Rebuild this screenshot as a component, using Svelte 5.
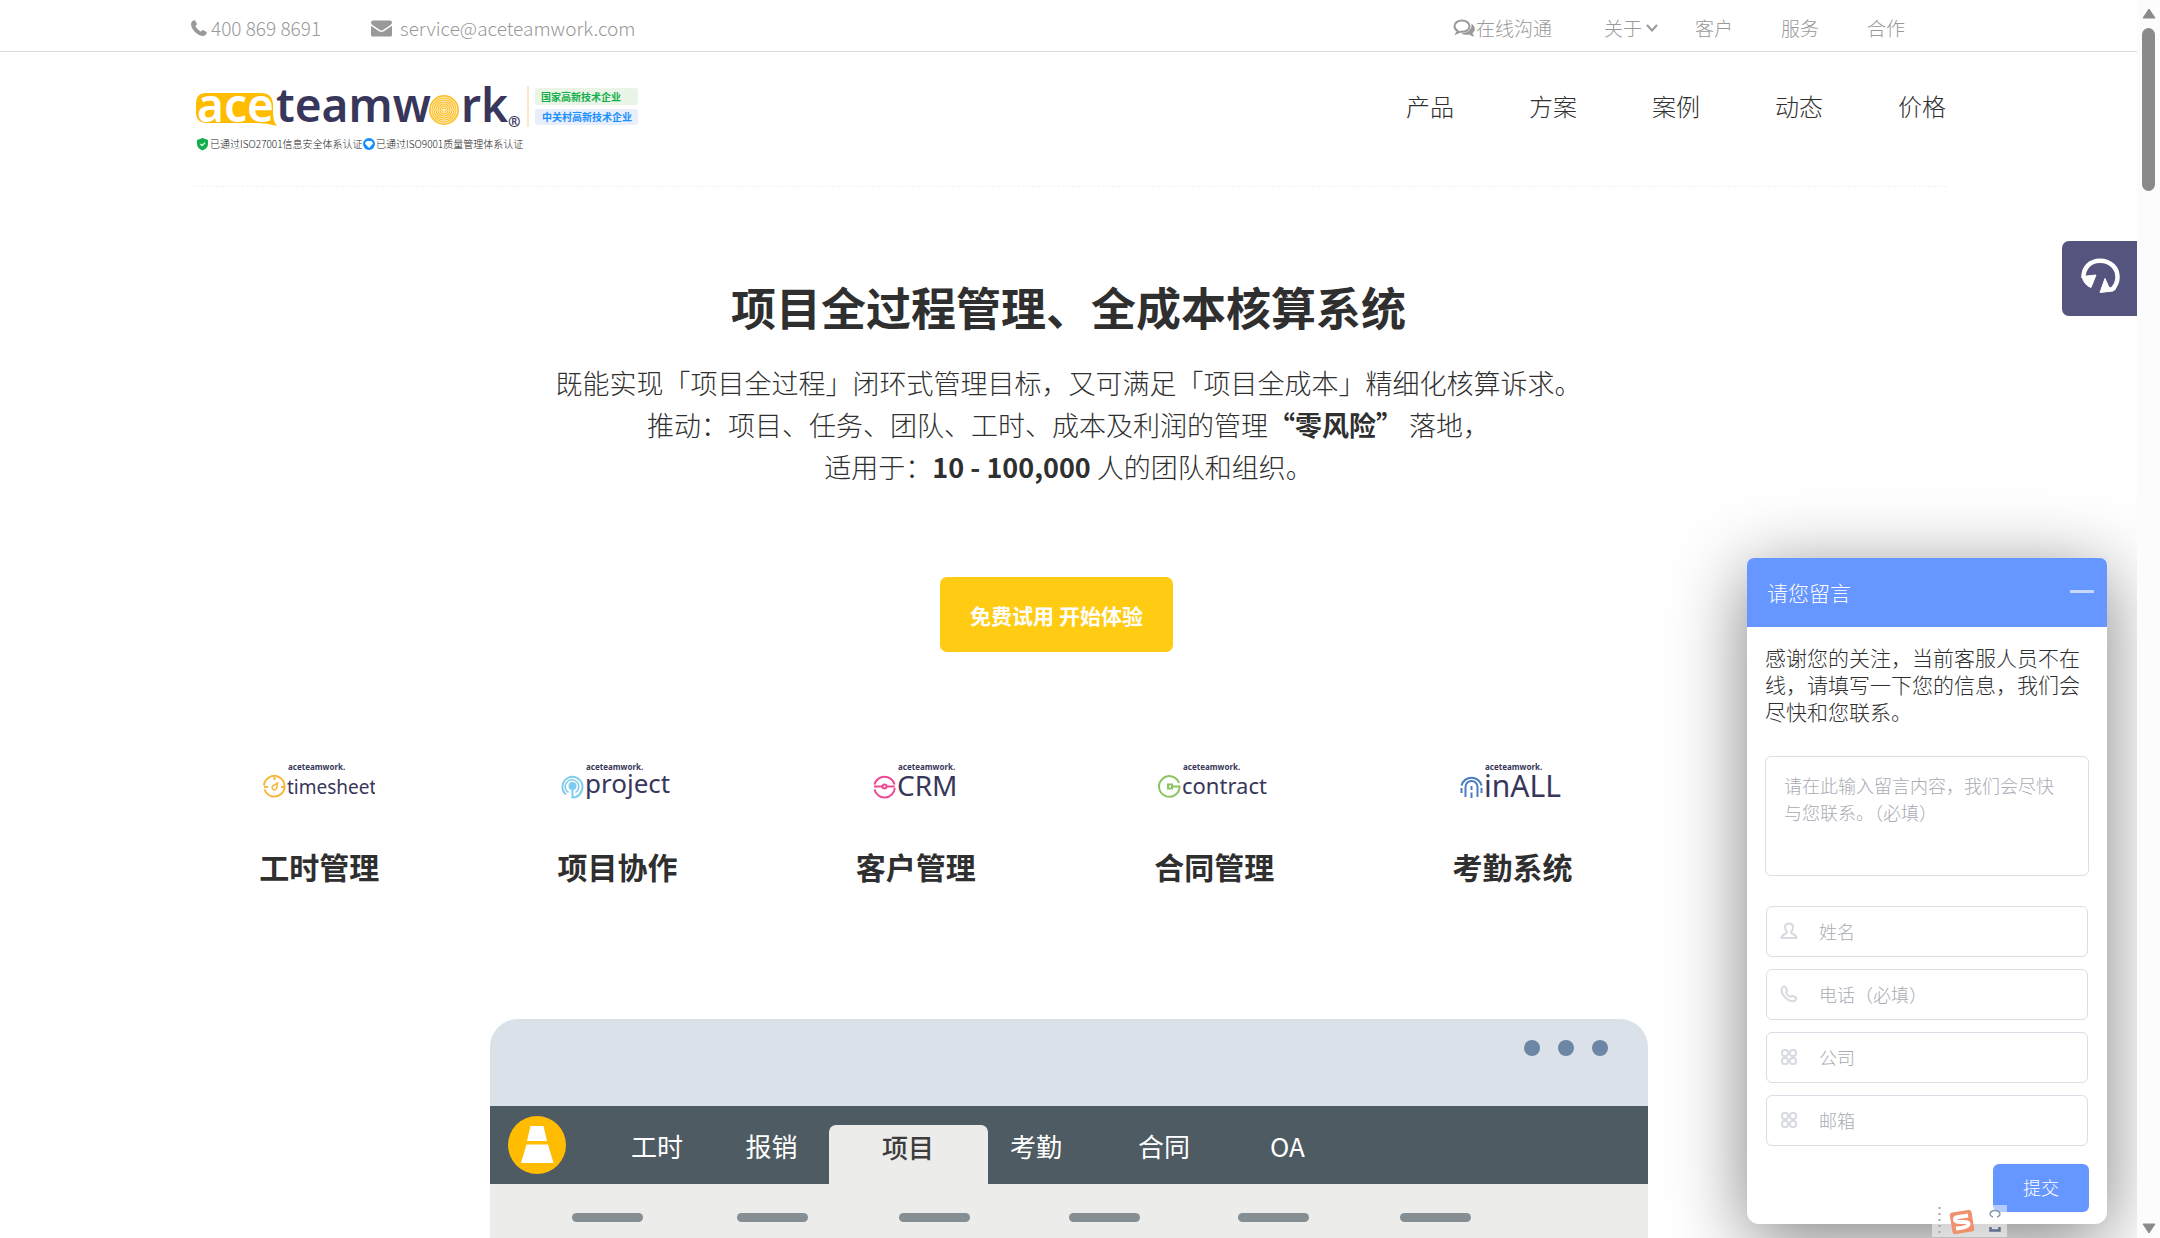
<script>
  const topLinks = ['客户', '服务', '合作'];
  const navLinks = ['产品', '方案', '案例', '动态', '价格'];
  const features = [
    { id: 'timesheet', title: '工时管理', width: 112, size: 19, base: 34 },
    { id: 'project', title: '项目协作', width: 112, size: 26, base: 33 },
    { id: 'CRM', title: '客户管理', width: 86, size: 28, base: 36 },
    { id: 'contract', title: '合同管理', width: 112, size: 22, base: 34 },
    { id: 'inALL', title: '考勤系统', width: 104, size: 30, base: 37 }
  ];
  const fields = [
    { id: 'name', label: '姓名', icon: 'user' },
    { id: 'phone', label: '电话（必填）', icon: 'phone' },
    { id: 'company', label: '公司', icon: 'grid' },
    { id: 'email', label: '邮箱', icon: 'grid' }
  ];
  const rings = [3, 5, 7, 9, 11, 13];
</script>

<div class="page">
  <div class="topbar">
    <div class="container bar">
      <div class="contact">
        <a href="#tel" class="tel">
          <svg width="16" height="16" viewBox="0 0 16 16" aria-hidden="true"><path fill="currentColor" d="M1.2 1.2C2.300 .4 3.500 0 4 .3L6 3.900C6.200 4.500 4.700 5.500 4.600 6.100C4.500 7 8.600 11.300 9.900 11.400C10.500 11.400 11.300 9.800 12 10L15.600 12C16 12.500 15.600 13.700 14.800 14.700C13.700 15.800 11.500 16.300 9.500 15.500C5.700 14 1.700 10.200 .4 6.400C-.2 4.400 .1 2.300 1.200 1.200Z" /></svg>
          400 869 8691
        </a>
        <a href="#mail" class="mail">
          <svg width="21" height="17" viewBox="0 0 21 17" aria-hidden="true"><path fill="currentColor" d="M2 .5H19Q21 .5 21 2.500Q21 3.800 19.500 5L12 10Q10.500 11 9 10L1.500 5Q0 3.800 0 2.500Q0 .5 2 .5ZM0 5.700L8 11.200Q10.500 12.800 13 11.200L21 5.700V15Q21 16.500 19.500 16.500H1.500Q0 16.500 0 15Z" /></svg>
          service@aceteamwork.com
        </a>
      </div>
      <nav class="toplinks" aria-label="辅助导航">
        <a href="#chat" class="chatlink">
          <svg width="22" height="18" viewBox="0 0 22 18" aria-hidden="true">
            <path d="M9 1.500C4.800 1.500 1.500 4 1.500 7.200C1.500 9.200 2.800 10.900 4.600 11.900L3.500 14.300L7.300 12.700C13 13.400 16.500 10.500 16.500 7.200C16.500 4 13.200 1.500 9 1.500Z" fill="none" stroke="currentColor" stroke-width="2" />
            <path fill="currentColor" d="M18.500 4.500C23 8 22.500 12 19.500 14.200Q20 16 21.500 17.500Q18.500 17.500 16.500 15.600C13 16.200 10 15.700 8 14.500C14.500 14.500 19.300 10.500 18.500 4.500Z" />
          </svg>在线沟通</a>
        <a href="#about" class="about">关于<svg width="14" height="10" viewBox="0 0 14 10" aria-hidden="true"><path d="M2 2L7 7.500L12 2" fill="none" stroke="currentColor" stroke-width="2" /></svg></a>
        {#each topLinks as link}
          <a href="#{link}">{link}</a>
        {/each}
      </nav>
    </div>
  </div>

  <header class="container header">
    <a href="#home" class="brand" aria-label="aceteamwork">
      <svg width="450" height="92" viewBox="0 -20 450 92">
        <path fill="#ffbc00" d="M15 9H70Q81 9 82 20C82 32 82 37 86 42Q76 39 66 39H16Q5 39 5 28V20Q5 9 15 9Z" />
        <g class="word">
          <text x="6" y="38" fill="#fff">ace</text>
          <text x="85" y="38">teamw</text>
          <text x="270" y="38">rk</text>
        </g>
        <circle cx="253" cy="26" r="15" fill="#ffc02a" />
        {#each rings as r}
          <circle cx="253" cy="26" {r} fill="none" stroke="#ffedc0" stroke-width="1" />
        {/each}
        <circle cx="253" cy="26" r="1.500" fill="#fff" />
        <text class="reg" x="317" y="43">®</text>
        <rect x="336" y="2" width="2" height="41" fill="#fde8c6" />
        <rect x="344" y="4" width="103" height="17" rx="3" fill="#ebf5e7" />
        <rect x="344" y="25" width="103" height="16" rx="3" fill="#e8eefa" />
        <text class="tag" x="350" y="17" fill="#12b04c">国家高新技术企业</text>
        <text class="tag" x="351" y="37" fill="#1890ff">中关村高新技术企业</text>
        <path fill="#12b04c" d="M11.500 54L17 56V60Q17 64 11.500 66.500Q6 64 6 60V56Z" />
        <path d="M9.500 60L11.200 61.700L14 58.700" fill="none" stroke="#fff" stroke-width="1.200" />
        <text class="iso" x="19" y="64">已通过ISO27001信息安全体系认证</text>
        <circle cx="178" cy="60" r="6" fill="#1890ff" />
        <path fill="#fff" d="M175.500 57H180.500L182 59.500L178 64L174 59.500Z" />
        <text class="iso" x="185" y="64">已通过ISO9001质量管理体系认证</text>
      </svg>
    </a>
    <nav class="mainnav" aria-label="主导航">
      {#each navLinks as link}
        <a href="#{link}">{link}</a>
      {/each}
    </nav>
  </header>

  <main class="container">
    <section class="hero">
      <h1>项目全过程管理、全成本核算系统</h1>
      <p>
        既能实现「项目全过程」闭环式管理目标，又可满足「项目全成本」精细化核算诉求。<br />
        推动：项目、任务、团队、工时、成本及利润的管理<strong>“零风险”</strong> 落地，<br />
        适用于：<strong>10 - 100,000</strong> 人的团队和组织。
      </p>
      <button type="button" class="cta">免费试用 开始体验</button>
    </section>

    <section class="features">
      {#each features as f}
        <a href="#{f.id}" class="feature">
          <svg width={f.width} height="44" viewBox="0 0 {f.width} 44" role="img" aria-label={f.id}>
            <text class="mini" x="25" y="10">aceteamwork.</text>
            <text class="product" x="24" y={f.base} font-size={f.size}>{f.id}</text>
            <g fill="none" stroke-width="2">
              {#if f.id === 'timesheet'}
                <g stroke="#f6b73c">
                  <path d="M1 25.500A10.300 10.300 0 1 1 1.500 29.500M1 27H5M11.500 17V20M18 27H21" />
                  <path d="M14.500 23L13.500 28.500A2.300 2.300 0 1 1 10.500 25.500Z" stroke-width="1.500" />
                </g>
              {:else if f.id === 'project'}
                <g stroke="#7fcdee">
                  <circle cx="11.500" cy="26" r="4" fill="#7fcdee" stroke="none" />
                  <path d="M11.500 29V37.500C17.500 37.500 21.500 32.500 21.500 26.500A10 10 0 1 0 5 34.500" />
                  <path d="M14.500 32.500A6.800 6.800 0 1 0 7.500 32.500" stroke-width="1.500" />
                </g>
              {:else if f.id === 'CRM'}
                <g stroke="#ee4a94">
                  <path d="M1.500 24.500A10.300 10.300 0 0 1 21.500 24.500M1 26.500H9M21.800 28A10.300 10.300 0 0 1 1.500 29.500M14 26.500H21.800" />
                  <circle cx="11.500" cy="26.500" r="2" />
                </g>
              {:else if f.id === 'contract'}
                <g stroke="#8cc462">
                  <path d="M21 23A10.300 10.300 0 1 0 21.600 26.500H14" />
                  <rect x="10" y="24.500" width="4" height="4" />
                </g>
              {:else}
                <g stroke="#4a7cc4">
                  <path d="M1.500 25.500A10.300 10.300 0 0 1 21.500 25.500M1.500 28V33M21.500 28V33" />
                  <path d="M5.500 37V27A6 6 0 0 1 17.500 27V37M11.500 26V30M11.500 32.500V38" />
                </g>
              {/if}
            </g>
          </svg>
          <h2>{f.title}</h2>
        </a>
      {/each}
    </section>

    <section class="mock" aria-label="产品界面示意">
      <div class="chrome"><i></i><i></i><i></i></div>
      <div class="tabs">
        <svg width="58" height="58" viewBox="0 0 58 58" aria-hidden="true">
          <circle cx="29" cy="29" r="29" fill="#ffbc00" />
          <path fill="#fff" d="M22.500 10H35.500L39 25H19ZM18.500 28.500H40L45.500 47H13Z" />
        </svg>
        <span>工时</span><span>报销</span><span class="active">项目</span><span>考勤</span><span>合同</span><span>OA</span>
      </div>
      <div class="lines"><i></i><i></i><i></i><i></i><i></i><i></i></div>
    </section>
  </main>

  <button type="button" class="support" aria-label="在线客服">
    <svg width="40" height="36" viewBox="0 0 40 36" aria-hidden="true">
      <path d="M3.500 20C3 10 10 2.800 20 2.800C31 2.800 37.500 10.500 37.500 19Q37.500 26 32.500 31" fill="none" stroke="#fff" stroke-width="4.500" />
      <path fill="#fff" stroke="#fff" stroke-linejoin="round" d="M2 18.500L16 17L11 29.500Q4 27 2 18.500ZM25 20.500L29 29.500L36 30.500L33 33L20 34.500Z" />
    </svg>
  </button>

  <form class="chat" onsubmit={(e) => e.preventDefault()}>
    <div class="chathead">
      <span>请您留言</span>
      <button type="button" aria-label="最小化"></button>
    </div>
    <div class="chatbody">
      <p>感谢您的关注，当前客服人员不在线，请填写一下您的信息，我们会尽快和您联系。</p>
      <textarea aria-label="留言内容" placeholder="请在此输入留言内容，我们会尽快与您联系。（必填）"></textarea>
      <div class="fields">
        {#each fields as f}
          <label class="field" for="f-{f.id}">
            <svg width="18" height="18" viewBox="0 0 18 18" fill="none" stroke="#d8dae1" stroke-width="2" stroke-linejoin="round" aria-hidden="true">
              {#if f.icon === 'user'}
                <path d="M9 1.500C11.500 1.500 13 3 13 5.500C13 7.500 12 9 11 10Q11 11.500 13 12Q16 13 16.500 16H1.500Q2 13 5 12Q7 11.500 7 10C6 9 5 7.500 5 5.500C5 3 6.500 1.500 9 1.500Z" />
              {:else if f.icon === 'phone'}
                <path d="M2 3Q4 .5 5.500 2L7 5Q7 6.500 6 7.500Q7 10.500 10.500 12Q12 10.500 13 11L16 12.500Q17 14 14.500 16C10 17.500 -.5 10 2 3Z" />
              {:else}
                <rect x="2" y="2" width="6" height="6" rx="2.500" /><rect x="10" y="2" width="6" height="6" rx="2.500" />
                <rect x="2" y="10" width="6" height="6" rx="2.500" /><rect x="10" y="10" width="6" height="6" rx="2.500" />
              {/if}
            </svg>
            <input id="f-{f.id}" type="text" placeholder={f.label} aria-label={f.label} />
          </label>
        {/each}
      </div>
      <button type="submit" class="submit">提交</button>
    </div>
  </form>
</div>

<div class="ime" aria-hidden="true">
  <svg width="75" height="32" viewBox="0 0 75 32">
    <path d="M7.500 2V32" stroke="#a8a8a8" stroke-width="2" stroke-dasharray="2 4" />
    <g transform="rotate(-9 30 17)">
      <rect x="19" y="6" width="22" height="22" rx="3" fill="#f0906c" />
      <path d="M37 11.500H26Q23 11.500 23.500 14Q24 16.500 30 17Q37 17.500 36 20.500Q35 23.500 23 22.500" fill="none" stroke="#fff" stroke-width="4" />
    </g>
    <path d="M61 12C56 10 58 5.500 63 5.500C68 5.500 70 10 65 12" fill="none" stroke="#8b98ad" stroke-width="1.500" />
    <path d="M58.500 22V25.500H67.500V22" fill="none" stroke="#5d6f8c" stroke-width="2.500" />
  </svg>
</div>

<div class="scrollbar" aria-hidden="true">
  <svg width="14" height="11" viewBox="0 0 14 11"><path d="M7 1L13 10H1Z" fill="#8a8a8a" stroke="#8a8a8a" stroke-linejoin="round" /></svg>
  <i></i>
  <svg class="down" width="14" height="11" viewBox="0 0 14 11"><path d="M7 10L13 1H1Z" fill="#8a8a8a" stroke="#8a8a8a" stroke-linejoin="round" /></svg>
</div>

<style>
  :global(body) {
    background: #fff;
    overflow: hidden;
  }
  :global(#app) {
    display: flex;
    height: 100vh;
    font-family: 'Noto Sans CJK SC', 'Noto Sans', sans-serif;
    color: #2f2f2f;
  }
  * { box-sizing: border-box; }
  a { color: inherit; text-decoration: none; }
  button, input, textarea { font: inherit; border: 0; margin: 0; }
  svg { display: block; flex: none; }

  .page {
    flex: 1;
    min-width: 0;
    position: relative;
    overflow: hidden;
  }
  .container {
    max-width: 1755px;
    margin: 0 auto;
  }
  .topbar {
    border-bottom: 1px solid #ddd;
    color: #999;
    font-size: 19px;
    font-weight: 300;
    line-height: 28px;
  }
  .bar {
    display: flex;
    justify-content: space-between;
    align-items: center;
    height: 51px;
    padding-top: 5px;
  }
  .contact, .toplinks, .contact a, .toplinks a {
    display: flex;
    align-items: center;
  }
  .contact { gap: 50px; }
  .tel { gap: 4px; }
  .mail { gap: 8px; }
  .toplinks {
    gap: 48px;
    padding-right: 41px;
  }
  .chatlink {
    gap: 1px;
    margin-right: 4px;
  }
  .about {
    gap: 3px;
    margin-right: -12px;
  }
  .header {
    display: flex;
    justify-content: space-between;
    align-items: flex-start;
    height: 135px;
    padding-top: 12px;
    border-bottom: 1px dashed #f2f2f2;
  }
  .word {
    font-family: 'Noto Sans', sans-serif;
    font-size: 46px;
    font-weight: 600;
    fill: #38365a;
  }
  .reg {
    font: 700 15px 'Noto Sans', sans-serif;
    fill: #38365a;
  }
  .tag { font-size: 10px; font-weight: 700; }
  .iso { font-size: 10px; font-weight: 300; fill: #222; }
  .mainnav {
    display: flex;
    gap: 75px;
    padding-top: 24px;
    font-size: 24px;
    font-weight: 300;
    line-height: 36px;
  }

  .hero {
    display: flex;
    flex-direction: column;
    align-items: center;
    padding-top: 90px;
    text-align: center;
  }
  h1 {
    margin: 0 0 25px;
    font-size: 45px;
    line-height: 60px;
  }
  .hero p {
    margin: 0 0 89px;
    font-size: 27px;
    font-weight: 300;
    line-height: 42px;
  }
  strong { font-weight: 700; }
  .cta {
    height: 75px;
    padding: 1px 30px 0;
    margin-right: 24px;
    border-radius: 7px;
    background: #ffcb13;
    color: #fff;
    font-size: 21px;
    font-weight: 700;
  }
  .features {
    display: grid;
    grid-template-columns: repeat(6, 1fr);
    margin: 108px -14px 0 -21px;
  }
  .feature {
    display: flex;
    flex-direction: column;
    align-items: center;
  }
  .mini {
    font: 700 8px 'Noto Sans', sans-serif;
    fill: #38365a;
  }
  .product {
    font-family: 'Noto Sans', sans-serif;
    fill: #38365a;
  }
  h2 {
    margin: 40px 0 0;
    font-size: 30px;
    line-height: 44px;
  }

  .mock {
    max-width: 1158px;
    margin: 131px auto 0;
  }
  .chrome {
    display: flex;
    justify-content: flex-end;
    gap: 18px;
    height: 87px;
    padding: 21px 40px 0;
    border-radius: 28px 28px 0 0;
    background: #dae1e9;
  }
  .chrome i {
    width: 16px;
    height: 16px;
    border-radius: 50%;
    background: #6c87a6;
  }
  .tabs {
    display: grid;
    grid-template-columns: 92px 115px 114px 159px 97px 159px 88px;
    align-items: center;
    height: 78px;
    padding-left: 18px;
    background: #4e5b63;
    color: #fff;
    font-size: 26px;
    text-align: center;
  }
  .tabs .active {
    align-self: end;
    height: 59px;
    border-radius: 7px 7px 0 0;
    background: #ececea;
    color: #3c3c3c;
    font-weight: 500;
    line-height: 44px;
  }
  .lines {
    display: grid;
    grid-template-columns: 165px 162px 170px 169px 162px 71px;
    height: 130px;
    padding: 29px 0 0 82px;
    background: #ececea;
  }
  .lines i {
    width: 71px;
    height: 9px;
    border-radius: 5px;
    background: #858e92;
  }

  .support {
    position: absolute;
    top: 241px;
    right: 0;
    display: flex;
    justify-content: center;
    width: 75px;
    height: 75px;
    padding: 17px 0 0;
    border-radius: 7px 0 0 7px;
    background: #54547f;
  }

  .chat {
    position: absolute;
    right: 30px;
    bottom: 14px;
    width: 360px;
    border-radius: 7px 7px 12px 12px;
    background: #fff;
    box-shadow: 0 15px 75px rgba(0, 0, 0, 0.5);
    font-weight: 300;
  }
  .chathead {
    display: flex;
    align-items: center;
    justify-content: space-between;
    height: 69px;
    padding: 0 13px 2px 20px;
    border-radius: 7px 7px 0 0;
    background: #6696ff;
    color: #fff;
    font-size: 21px;
  }
  .chathead button {
    width: 24px;
    height: 3px;
    padding: 0;
    background: #c5d7ff;
  }
  .chatbody {
    display: flex;
    flex-direction: column;
    padding: 17px 18px 12px;
  }
  .chatbody p {
    margin: 0 0 31px;
    font-size: 21px;
    line-height: 27px;
  }
  textarea {
    height: 120px;
    padding: 15px 18px;
    border: 1px solid #dcdde6;
    border-radius: 6px;
    background: #fff;
    font-size: 18px;
    line-height: 27px;
    resize: none;
  }
  ::placeholder { color: #a8abb3; opacity: 1; }
  .fields {
    display: grid;
    gap: 12px;
    margin: 30px 1px 18px;
  }
  .field {
    display: flex;
    align-items: center;
    gap: 21px;
    height: 51px;
    padding: 0 13px 1px;
    border: 1px solid #dcdde6;
    border-radius: 6px;
    font-size: 18px;
  }
  .field input {
    flex: 1;
    min-width: 0;
    padding: 0;
    background: none;
    outline: 0;
  }
  .submit {
    align-self: flex-end;
    width: 96px;
    height: 48px;
    padding: 0 0 2px;
    border-radius: 6px;
    background: #6696ff;
    color: #fff;
    font-size: 18px;
  }

  .ime {
    position: fixed;
    left: 1932px;
    bottom: 1px;
    background: rgba(255, 255, 255, 0.5);
  }
  .scrollbar {
    display: flex;
    flex-direction: column;
    align-items: center;
    width: 23px;
    padding: 8px 0 4px;
    background: #fcfcfc;
  }
  .scrollbar i {
    width: 13px;
    height: 163px;
    margin-top: 9px;
    border-radius: 7px;
    background: #8a8a8a;
  }
  .down { margin-top: auto; }
</style>
